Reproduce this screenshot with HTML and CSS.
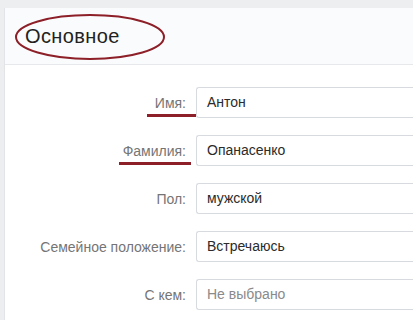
FILE: index.html
```html
<!DOCTYPE html>
<html>
<head>
  <link rel="stylesheet" href="styles.css">
</head>
<body>
  <div class="page">
    <div class="card">
      <!-- Header -->
      <div class="card-header">
        <span class="title">Основное</span>
        <svg class="circle-mark" width="154" height="50" viewBox="0 0 154 50">
          <ellipse cx="77" cy="25" rx="74" ry="22" fill="none" stroke="#8c1f27" stroke-width="2"/>
        </svg>
      </div>

      <!-- Form rows -->
      <div class="form">
        <div class="row">
          <label class="label marked mark-name">Имя:</label>
          <div class="field">Антон</div>
        </div>
        <div class="row">
          <label class="label marked mark-surname">Фамилия:</label>
          <div class="field">Опанасенко</div>
        </div>
        <div class="row">
          <label class="label">Пол:</label>
          <div class="field">мужской</div>
        </div>
        <div class="row">
          <label class="label">Семейное положение:</label>
          <div class="field">Встречаюсь</div>
        </div>
        <div class="row">
          <label class="label">С кем:</label>
          <div class="field placeholder">Не выбрано</div>
        </div>
      </div>
    </div>
  </div>
</body>
</html>
```

FILE: styles.css
```css
html, body {
  margin: 0;
  overflow: hidden;
}

body {
  font-family: "Liberation Sans", Arial, sans-serif;
  background-color: #edeef0;
  width: 413px;
  height: 320px;
}

.page {
  box-sizing: border-box;
  height: 320px;
  padding: 8px 0 0 4px;
  display: flex;
}

.card {
  flex: 1;
  background-color: #fff;
  border-left: 1px solid #e3e4e8;
}

.card-header {
  position: relative;
  height: 56px;
  padding-left: 20px;
  display: flex;
  align-items: center;
  background-color: #fafbfc;
  border-bottom: 1px solid #e7e8ec;
}

.title {
  font-size: 20px;
  letter-spacing: 0.4px;
  color: #222;
}

.circle-mark {
  position: absolute;
  left: 8px;
  top: 4px;
}

.form {
  display: flex;
  flex-direction: column;
  gap: 17px;
  padding-top: 22px;
}

.row {
  display: grid;
  grid-template-columns: 181px 1fr;
  gap: 10px;
  align-items: center;
}

.label {
  position: relative;
  justify-self: end;
  font-size: 14px;
  color: #757575;
}

.marked::after {
  content: "";
  position: absolute;
  height: 3px;
  background-color: #8c1f27;
  top: 19px;
}

.mark-name::after {
  left: -8px;
  right: -10px;
}

.mark-surname::after {
  left: -4px;
  right: -5px;
}

.field {
  height: 29px;
  line-height: 29px;
  padding-left: 10px;
  border: 1px solid #d7dadf;
  border-right: none;
  border-radius: 3px 0 0 3px;
  font-size: 14px;
  color: #2b2b2b;
}

.field.placeholder {
  color: #8a8a8a;
}
```
